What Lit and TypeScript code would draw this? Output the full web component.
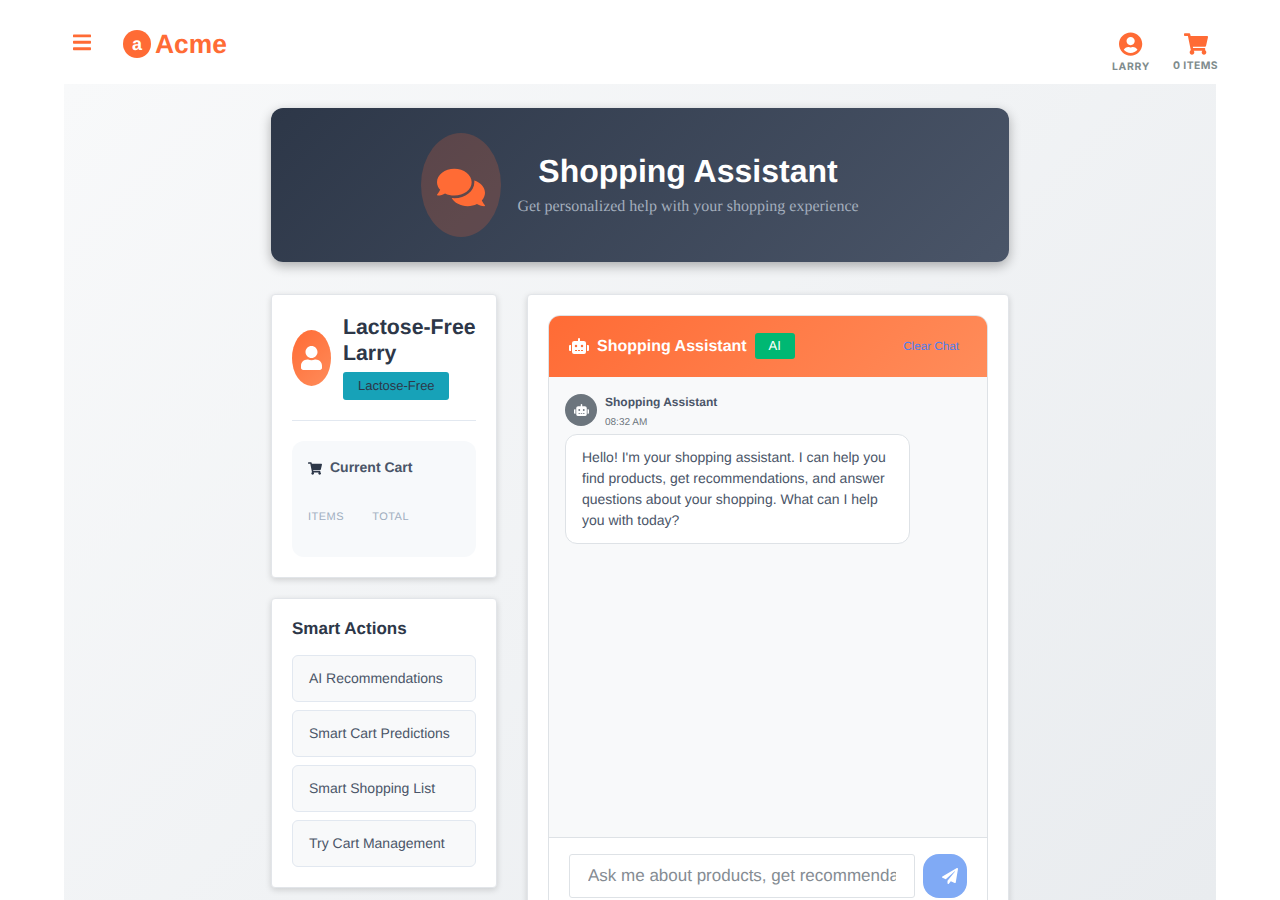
import { LitElement, css, html, svg } from 'lit';
import { customElement } from 'lit/decorators.js';

const icon = (w: number, d: string) =>
  html`<svg viewBox="0 0 ${w} 512" fill="currentColor" aria-hidden="true">${svg`<path d=${d}></path>`}</svg>`;

const BARS = 'M16 132h416c8.837 0 16-7.163 16-16V76c0-8.837-7.163-16-16-16H16C7.163 60 0 67.163 0 76v40c0 8.837 7.163 16 16 16zm0 160h416c8.837 0 16-7.163 16-16v-40c0-8.837-7.163-16-16-16H16c-8.837 0-16 7.163-16 16v40c0 8.837 7.163 16 16 16zm0 160h416c8.837 0 16-7.163 16-16v-40c0-8.837-7.163-16-16-16H16c-8.837 0-16 7.163-16 16v40c0 8.837 7.163 16 16 16z';
const USER_CIRCLE = 'M248 8C111 8 0 119 0 256s111 248 248 248 248-111 248-248S385 8 248 8zm0 96c48.6 0 88 39.4 88 88s-39.4 88-88 88-88-39.4-88-88 39.4-88 88-88zm0 344c-58.7 0-111.3-26.6-146.5-68.2 18.8-35.4 55.6-59.8 98.5-59.8 2.4 0 4.8.4 7.1 1.1 13 4.2 26.6 6.9 40.9 6.9 14.3 0 28-2.7 40.9-6.9 2.3-.7 4.7-1.1 7.1-1.1 42.9 0 79.7 24.4 98.5 59.8C359.3 421.4 306.7 448 248 448z';
const CART = 'M528.12 301.319l47.273-208C578.806 78.301 567.391 64 551.99 64H159.208l-9.166-44.81C147.758 8.021 137.93 0 126.529 0H24C10.745 0 0 10.745 0 24v16c0 13.255 10.745 24 24 24h69.883l70.248 343.435C147.325 417.1 136 435.222 136 456c0 30.928 25.072 56 56 56s56-25.072 56-56c0-15.674-6.447-29.835-16.824-40h209.647C430.447 426.165 424 440.326 424 456c0 30.928 25.072 56 56 56s56-25.072 56-56c0-22.172-12.888-41.332-31.579-50.405l5.517-24.276c3.413-15.018-8.002-29.319-23.403-29.319H218.117l-6.545-32h293.145c11.206 0 20.92-7.754 23.403-18.681z';
const COMMENTS = 'M416 192c0-88.4-93.1-160-208-160S0 103.6 0 192c0 34.3 14.1 65.9 38 92-13.4 30.2-35.5 54.2-35.8 54.5-2.2 2.3-2.8 5.7-1.5 8.7S4.8 352 8 352c36.6 0 66.9-12.3 88.7-25 32.2 15.7 70.3 25 111.3 25 114.9 0 208-71.6 208-160zm122 220c23.9-26 38-57.7 38-92 0-66.9-53.5-124.2-129.3-148.1.9 6.6 1.3 13.3 1.3 20.1 0 105.9-107.7 192-240 192-10.8 0-21.3-.8-31.7-1.9C207.8 439.6 281.8 480 368 480c41 0 79.1-9.2 111.3-25 21.8 12.7 52.1 25 88.7 25 3.2 0 6.1-1.9 7.3-4.8 1.3-2.9.7-6.3-1.5-8.7-.3-.3-22.4-24.2-35.8-54.5z';
const USER = 'M224 256c70.7 0 128-57.3 128-128S294.7 0 224 0 96 57.3 96 128s57.3 128 128 128zm89.6 32h-16.7c-22.2 10.2-46.9 16-72.9 16s-50.6-5.8-72.9-16h-16.7C60.2 288 0 348.2 0 422.4V464c0 26.5 21.5 48 48 48h352c26.5 0 48-21.5 48-48v-41.6c0-74.2-60.2-134.4-134.4-134.4z';
const ROBOT = 'M32,224H64V416H32A31.96166,31.96166,0,0,1,0,384V256A31.96166,31.96166,0,0,1,32,224Zm512-48V448a64.06328,64.06328,0,0,1-64,64H160a64.06328,64.06328,0,0,1-64-64V176a79.974,79.974,0,0,1,80-80H288V32a32,32,0,0,1,64,0V96H464A79.974,79.974,0,0,1,544,176ZM264,256a40,40,0,1,0-40,40A39.997,39.997,0,0,0,264,256Zm-8,128H192v32h64Zm96,0H288v32h64ZM456,256a40,40,0,1,0-40,40A39.997,39.997,0,0,0,456,256Zm-8,128H384v32h64ZM640,256V384a31.96166,31.96166,0,0,1-32,32H576V224h32A31.96166,31.96166,0,0,1,640,256Z';
const PLANE = 'M476 3.2L12.5 270.6c-18.1 10.4-15.8 35.6 2.2 43.2L121 358.4l287.3-253.2c5.5-4.9 13.3 2.6 8.6 8.3L176 407v80.5c0 23.6 28.5 32.9 42.5 15.8L282 426l124.6 52.2c14.2 6 30.4-2.9 33-18.2l72-432C515 7.8 493.3-6.8 476 3.2z';

const ACTIONS = ['AI Recommendations', 'Smart Cart Predictions', 'Smart Shopping List', 'Try Cart Management'];

@customElement('app-root')
export class AppRoot extends LitElement {
  static styles = css`
    :host {
      display: block;
      height: 900px;
      overflow: hidden;
      background: #fff;
      font-family: 'Liberation Sans', Arial, sans-serif;
      color: #2d3748;
      text-rendering: geometricPrecision;
    }

    * {
      box-sizing: border-box;
    }

    svg {
      display: block;
    }

    .topbar {
      height: 84px;
      margin: 0 64px;
      display: flex;
      justify-content: space-between;
    }

    .brand {
      display: flex;
      align-items: flex-start;
      padding: 30px 0 0 9px;
      color: #ff6b35;
    }

    .bars {
      width: 18px;
      height: 20px;
      margin-top: 2px;
    }

    .logo {
      display: flex;
      align-items: center;
      margin-left: 32px;
      gap: 4px;
      font-size: 26.4px;
      font-weight: 700;
      line-height: 28px;
    }

    .logo-mark {
      width: 28px;
      height: 28px;
      border-radius: 50%;
      background: #ff6b35;
      color: #fff;
      font-size: 18px;
      display: flex;
      align-items: center;
      justify-content: center;
    }

    .links {
      display: flex;
      gap: 23px;
      padding: 32px 0 0;
      margin-right: -2px;
    }

    .link {
      display: flex;
      flex-direction: column;
      align-items: center;
      color: #ff6b35;
    }

    .link span {
      font-family: Inter, sans-serif;
      font-size: 10.4px;
      font-weight: 700;
      letter-spacing: 0.4px;
      color: #7f8c8d;
      line-height: 12px;
    }

    .link svg {
      height: 24px;
    }

    .link.user span {
      margin-top: 5px;
      letter-spacing: 0.7px;
    }

    .link.cart svg {
      width: 24px;
      height: 22px;
      margin-top: 1px;
    }

    .link.cart span {
      margin-top: 5px;
    }

    .page {
      margin: 0 64px;
      height: 816px;
      padding: 24px 207px 0;
      background: linear-gradient(135deg, #f8f9fa 0%, #e9ecef 100%);
    }

    .banner {
      height: 154px;
      border-radius: 12px;
      background: linear-gradient(135deg, #2d3748 0%, #4a5568 100%);
      box-shadow: 0 4px 12px rgba(0, 0, 0, 0.3);
      display: flex;
      align-items: center;
      justify-content: center;
      gap: 16px;
    }

    .banner-icon {
      width: 80px;
      height: 104px;
      border-radius: 50%;
      background: rgba(255, 107, 53, 0.2);
      color: #ff6b35;
      display: flex;
      align-items: center;
      justify-content: center;
    }

    .banner-icon svg {
      width: 48px;
      height: 43px;
      margin-top: 5px;
    }

    .banner-text {
      text-align: center;
    }

    .banner h1 {
      margin: 0 0 7px;
      font-size: 32px;
      line-height: 38px;
      font-weight: 700;
      color: #fff;
    }

    .banner p {
      margin: 0 0 1px;
      font-family: 'Liberation Serif', 'Times New Roman', serif;
      font-size: 16px;
      line-height: 20px;
      color: #a3aebd;
    }

    .columns {
      display: grid;
      grid-template-columns: 226px 482px;
      gap: 30px;
      margin-top: 32px;
      align-items: start;
    }

    .card {
      background: #fff;
      border: 1px solid #e2e5e9;
      border-radius: 4px;
      box-shadow: 0 2px 6px rgba(0, 0, 0, 0.15);
    }

    .profile {
      padding: 19px 20px 20px;
      height: 284px;
    }

    .who {
      display: flex;
      align-items: center;
      gap: 12px;
      padding-bottom: 20px;
      border-bottom: 1px solid #e2e8f0;
    }

    .avatar {
      width: 39px;
      height: 56px;
      flex: none;
      margin-top: 1px;
      border-radius: 50%;
      background: linear-gradient(135deg, #ff6b35, #ff8c5a);
      color: #fff;
      display: flex;
      align-items: center;
      justify-content: center;
    }

    .avatar svg {
      width: 21px;
      height: 24px;
    }

    .who h2 {
      margin: 0;
      font-size: 21.3px;
      line-height: 26px;
      font-weight: 700;
      white-space: nowrap;
    }

    .diet {
      display: inline-block;
      margin-top: 6px;
      padding: 0 15px;
      width: 106px;
      height: 28px;
      line-height: 28px;
      font-size: 13px;
      white-space: nowrap;
      border-radius: 3px;
      background: #17a2b8;
      color: #2d3748;
    }

    .cart-box {
      margin-top: 20px;
      height: 116px;
      padding: 16px;
      border-radius: 12px;
      background: #f7f9fb;
    }

    .cart-title {
      display: flex;
      align-items: center;
      gap: 8px;
      font-size: 14px;
      font-weight: 700;
      line-height: 20px;
      color: #4a5568;
    }

    .cart-title svg {
      width: 14px;
      height: 13px;
      margin-top: 2px;
      color: #2d3748;
    }

    .stats {
      display: flex;
      gap: 28px;
      margin-top: 33px;
      font-size: 11px;
      line-height: 14px;
      letter-spacing: 0.5px;
      color: #a0aec0;
    }

    .actions {
      margin-top: 20px;
      padding: 19px 20px 20px;
      height: 290px;
    }

    .actions h3 {
      margin: 0 0 16px;
      font-size: 17px;
      line-height: 21px;
      font-weight: 700;
    }

    .action {
      height: 47px;
      margin-bottom: 8px;
      padding: 0 16px 1px;
      display: flex;
      align-items: center;
      font-size: 14px;
      color: #4a5568;
      background: #f8f9fa;
      border: 1px solid #e2e8f0;
      border-radius: 6px;
    }

    .chat-card {
      padding: 20px 20px 0;
      height: 700px;
    }

    .chat {
      height: 679px;
      border: 1px solid #dee2e6;
      border-radius: 12px 12px 0 0;
      overflow: hidden;
      background: #f8f9fa;
    }

    .chat-head {
      height: 62px;
      margin: -1px -1px 0;
      padding: 0 29px 0 21px;
      display: flex;
      align-items: center;
      background: linear-gradient(135deg, #ff6b35 0%, #ff8c5a 100%);
      color: #fff;
    }

    .chat-head svg {
      width: 20px;
      height: 16px;
      margin-right: 8px;
    }

    .chat-head strong {
      margin-top: 2px;
      font-size: 16px;
    }

    .ai {
      margin-left: 8px;
      width: 40px;
      height: 26px;
      line-height: 26px;
      text-align: center;
      font-size: 13px;
      border-radius: 3px;
      background: #00b873;
    }

    .clear {
      margin: 1px 0 0 auto;
      font-size: 11.7px;
      color: #4d7ff0;
    }

    .messages {
      height: 461px;
      padding: 17px 16px 16px;
      border-bottom: 1px solid #dee2e6;
    }

    .meta {
      display: flex;
      align-items: flex-start;
      gap: 8px;
    }

    .bot {
      width: 32px;
      height: 32px;
      border-radius: 50%;
      background: #6c757d;
      color: #fff;
      display: flex;
      align-items: center;
      justify-content: center;
    }

    .bot svg {
      width: 15px;
      height: 12px;
    }

    .sender {
      font-size: 12px;
      font-weight: 700;
      line-height: 16px;
      color: #4a5568;
    }

    .time {
      margin-top: 6px;
      font-size: 10px;
      line-height: 14px;
      color: #6c757d;
    }

    .bubble {
      width: 345px;
      margin-top: 4px;
      padding: 12px 16px;
      font-size: 14px;
      line-height: 21px;
      color: #4a5568;
      background: #fff;
      border: 1px solid #dee2e6;
      border-radius: 12px;
    }

    .composer {
      display: flex;
      gap: 8px;
      padding: 16px 20px;
      background: #fff;
    }

    input {
      width: 346px;
      height: 44px;
      padding: 0 18px;
      font-family: inherit;
      font-size: 17px;
      text-rendering: geometricPrecision;
      background: #fff;
      border: 1px solid #dee2e6;
      border-radius: 3px;
      outline: none;
    }

    input::placeholder {
      color: #858c93;
    }

    .send {
      width: 44px;
      height: 44px;
      border-radius: 16px;
      background: #80aaf5;
      color: #fff;
      display: flex;
      align-items: center;
      justify-content: center;
    }

    .send svg {
      width: 16px;
      height: 16px;
      margin-left: 9px;
    }
  `;

  render() {
    return html`
      <header class="topbar">
        <div class="brand">
          <div class="bars">${icon(448, BARS)}</div>
          <div class="logo"><span class="logo-mark">a</span>Acme</div>
        </div>
        <nav class="links">
          <div class="link user">${icon(496, USER_CIRCLE)}<span>LARRY</span></div>
          <div class="link cart">${icon(576, CART)}<span>0 ITEMS</span></div>
        </nav>
      </header>

      <main class="page">
        <section class="banner">
          <div class="banner-icon">${icon(576, COMMENTS)}</div>
          <div class="banner-text">
            <h1>Shopping Assistant</h1>
            <p>Get personalized help with your shopping experience</p>
          </div>
        </section>

        <div class="columns">
          <aside>
            <section class="card profile">
              <div class="who">
                <div class="avatar">${icon(448, USER)}</div>
                <div>
                  <h2>Lactose-Free<br />Larry</h2>
                  <span class="diet">Lactose-Free</span>
                </div>
              </div>
              <div class="cart-box">
                <div class="cart-title">${icon(576, CART)}Current Cart</div>
                <div class="stats"><span>ITEMS</span><span>TOTAL</span></div>
              </div>
            </section>

            <section class="card actions">
              <h3>Smart Actions</h3>
              ${ACTIONS.map((a) => html`<div class="action">${a}</div>`)}
            </section>
          </aside>

          <section class="card chat-card">
            <div class="chat">
              <div class="chat-head">
                ${icon(640, ROBOT)}
                <strong>Shopping Assistant</strong>
                <span class="ai">AI</span>
                <span class="clear">Clear Chat</span>
              </div>
              <div class="messages">
                <div class="meta">
                  <div class="bot">${icon(640, ROBOT)}</div>
                  <div>
                    <div class="sender">Shopping Assistant</div>
                    <div class="time">08:32 AM</div>
                  </div>
                </div>
                <div class="bubble">
                  Hello! I'm your shopping assistant. I can help you find products, get
                  recommendations, and answer questions about your shopping. What can I help you
                  with today?
                </div>
              </div>
              <div class="composer">
                <input placeholder="Ask me about products, get recommendations..." />
                <div class="send">${icon(512, PLANE)}</div>
              </div>
            </div>
          </section>
        </div>
      </main>
    `;
  }
}
